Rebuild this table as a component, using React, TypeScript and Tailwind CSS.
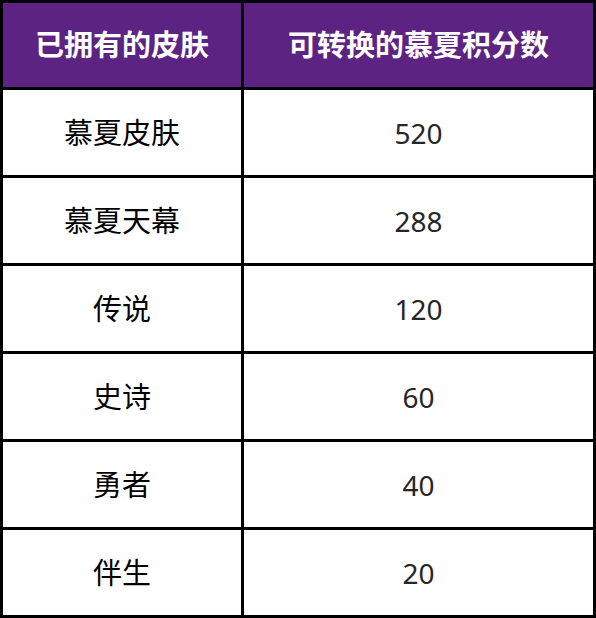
const rows = [
  ["慕夏皮肤", "520"],
  ["慕夏天幕", "288"],
  ["传说", "120"],
  ["史诗", "60"],
  ["勇者", "40"],
  ["伴生", "20"],
];

export default function App() {
  return (
    <div className="w-[596px] h-[618px] bg-white font-['Segoe_UI','Noto_Sans','Noto_Sans_CJK_SC',sans-serif]">
      <table className="w-[596px] border-collapse border-[3px] border-black table-fixed">
        <colgroup>
          <col className="w-[241px]" />
          <col />
        </colgroup>
        <thead>
          <tr className="h-[87px] bg-[#5c2382]">
            <th className="border-[3px] border-black text-white text-[29px] font-bold text-center">
              已拥有的皮肤
            </th>
            <th className="border-[3px] border-black text-white text-[29px] font-bold text-center">
              可转换的慕夏积分数
            </th>
          </tr>
        </thead>
        <tbody>
          {rows.map(([name, pts]) => (
            <tr key={name} className="h-[88px]">
              <td className="border-[3px] border-black text-center text-[29px] text-black">
                {name}
              </td>
              <td className="border-[3px] border-black text-center text-[28px] text-[#262626]">
                {pts}
              </td>
            </tr>
          ))}
        </tbody>
      </table>
    </div>
  );
}
